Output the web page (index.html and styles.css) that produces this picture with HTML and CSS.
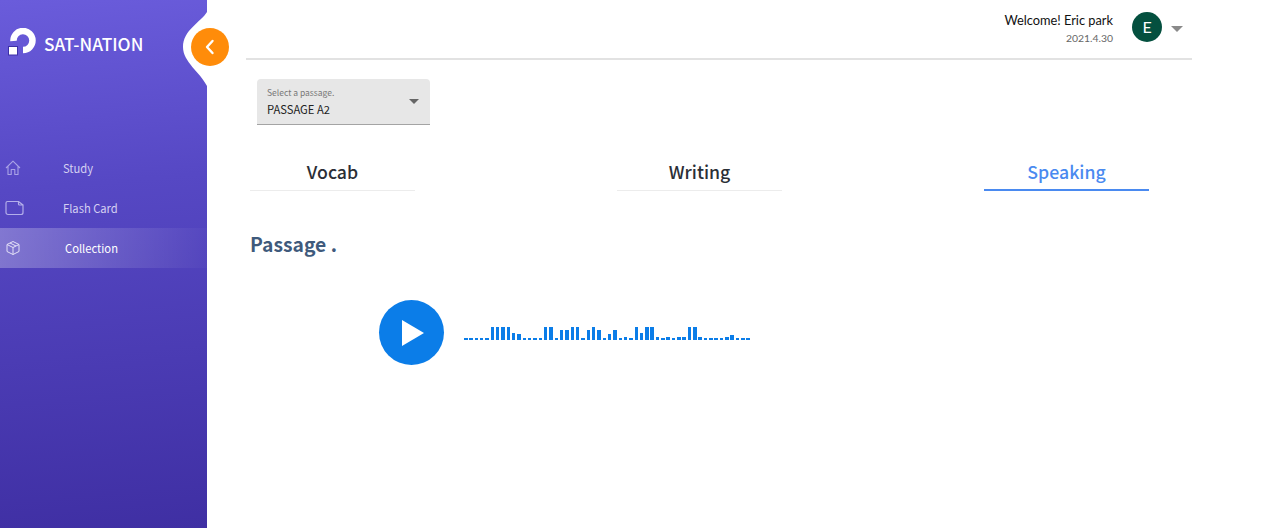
FILE: index.html
```html
<!DOCTYPE html>
<html lang="en">
<head>
<meta charset="utf-8">
<title>SAT-NATION</title>
<link rel="stylesheet" href="styles.css">
</head>
<body>
<div class="app">
  <aside class="sidebar">
    <div class="brand">
      <svg class="brand-mark" width="28" height="28" viewBox="0 0 28 28">
        <path d="M5.5 13 A9.5 9.5 0 1 1 15 22" fill="none" stroke="#fff" stroke-width="6.5"/>
        <rect x="0.5" y="18.5" width="9" height="8.5" fill="#fff" stroke="#3c2fa8" stroke-width="1"/>
      </svg>
      <span class="brand-name">SAT-NATION</span>
    </div>
    <svg class="notch" width="24" height="74" viewBox="0 0 24 74">
      <path d="M24 0 C18 10 0 18 0 35 C0 50 17 60 24 74 Z" fill="#fff"/>
    </svg>
    <button class="collapse" type="button" aria-label="Collapse">
      <svg width="12" height="16" viewBox="0 0 12 16"><path d="M8.5 2 L3 8 L8.5 14" fill="none" stroke="#fff" stroke-width="2.4" stroke-linecap="round" stroke-linejoin="round"/></svg>
    </button>
    <nav class="nav">
      <a class="nav-item">
        <svg class="nav-icon" width="16" height="16" viewBox="0 0 16 16"><path d="M1 8 L8 1.2 L15 8 M3 6.5 V14.5 H6.2 V9.5 H9.8 V14.5 H13 V6.5" fill="none" stroke="#a9a3e6" stroke-width="1.1" stroke-linejoin="round"/></svg>
        <span>Study</span>
      </a>
      <a class="nav-item">
        <svg class="nav-icon" width="19" height="15" viewBox="0 0 19 15"><path d="M2.5 1 H13.5 V3.5 A1 1 0 0 0 14.5 4.5 H18 V12 A2 2 0 0 1 16 14 H3 A2 2 0 0 1 1 12 V2.5 A1.5 1.5 0 0 1 2.5 1 Z M13.5 1 L18 4.5" fill="none" stroke="#b3aeea" stroke-width="1.2"/></svg>
        <span>Flash Card</span>
      </a>
      <a class="nav-item is-active">
        <svg class="nav-icon" width="16" height="16" viewBox="0 0 16 16"><path d="M8 1.5 L14 4.5 V11.5 L8 14.5 L2 11.5 V4.5 Z M2 4.5 L8 7.5 L14 4.5 M8 7.5 V14.5 M5 3 L11 6" fill="none" stroke="#e4e1f7" stroke-width="1" stroke-linejoin="round"/></svg>
        <span>Collection</span>
      </a>
    </nav>
  </aside>

  <main class="main">
    <header class="topbar">
      <div class="user-text">
        <div class="welcome">Welcome! Eric park</div>
        <div class="date">2021.4.30</div>
      </div>
      <div class="avatar">E</div>
      <div class="caret caret-top"></div>
    </header>

    <div class="select">
      <div class="select-text">
        <div class="select-label">Select a passage.</div>
        <div class="select-value">PASSAGE A2</div>
      </div>
      <div class="caret caret-select"></div>
    </div>

    <div class="tabs">
      <div class="tab">Vocab</div>
      <div class="tab">Writing</div>
      <div class="tab is-active">Speaking</div>
    </div>

    <h2 class="passage">Passage .</h2>

    <div class="player">
      <button class="play" type="button" aria-label="Play">
        <svg width="22" height="26" viewBox="0 0 22 26"><path d="M0 0 L22 13 L0 26 Z" fill="#fff"/></svg>
      </button>
      <div class="wave">
        <i class="d"></i><i class="d"></i><i class="d"></i><i class="d"></i><i class="d"></i>
        <i class="t"></i><i class="t"></i><i class="t"></i><i class="t"></i><i class="m"></i><i class="s"></i>
        <i class="d"></i><i class="d"></i><i class="d"></i><i class="d"></i>
        <i class="t"></i><i class="t"></i><i class="d"></i>
        <i class="l"></i><i class="l"></i><i class="t"></i><i class="t"></i><i class="d"></i>
        <i class="l"></i><i class="t"></i><i class="l"></i><i class="d"></i><i class="s"></i><i class="l"></i>
        <i class="d"></i><i class="x"></i><i class="d"></i><i class="t"></i><i class="m"></i><i class="t"></i><i class="t"></i>
        <i class="x"></i><i class="d"></i><i class="x"></i><i class="d"></i><i class="x"></i><i class="x"></i><i class="t"></i><i class="t"></i>
        <i class="x"></i><i class="d"></i><i class="d"></i><i class="d"></i><i class="d"></i><i class="x"></i><i class="y"></i><i class="d"></i><i class="d"></i><i class="d"></i>
      </div>
    </div>
  </main>
</div>
</body>
</html>
```
FILE: styles.css
```css
* { box-sizing: border-box; }
html, body { margin: 0; height: 100%; background: #fff; overflow: hidden; }
body { font-family: "Noto Sans CJK KR", "Noto Sans", sans-serif; }

.app { display: flex; height: 528px; }

.sidebar {
  position: relative;
  flex: 0 0 207px;
  background: linear-gradient(175deg, #6a5cdb 0%, #5648c4 35%, #3f2fa3 100%);
  color: #fff;
}
.brand { display: flex; align-items: flex-start; padding: 28px 0 0 8px; height: 60px; }
.brand-mark { display: block; flex: none; }
.brand-name { margin-left: 8px; font-size: 17.3px; font-weight: 500; line-height: 32px; letter-spacing: 0; }

.notch { position: absolute; left: 183px; top: 12px; }
.collapse {
  position: absolute; left: 191px; top: 28px;
  width: 38px; height: 38px; padding: 0; border: 0; border-radius: 50%;
  background: #ff8c0a;
  display: flex; align-items: center; justify-content: center;
}

.nav { margin-top: 88px; display: flex; flex-direction: column; }
.nav-item {
  height: 40px; display: flex; align-items: center; position: relative;
  padding: 0 0 1px 63px; font-size: 11.2px; color: #d4d0f2;
}
.nav-icon { position: absolute; left: 5px; top: 50%; transform: translateY(-50%); }
.nav-item.is-active {
  padding-left: 65px; color: #fff;
  background: linear-gradient(90deg, rgba(255,255,255,.27), rgba(255,255,255,.02));
}

.main { flex: 0 0 946px; margin-left: 39px; display: flex; flex-direction: column; }

.topbar {
  height: 60px; border-bottom: 2px solid #e2e2e2;
  display: flex; align-items: flex-start; justify-content: flex-end;
  padding: 12px 9px 0 0;
}
.user-text { text-align: right; font-family: Lato, sans-serif; margin-right: 19px; }
.welcome { font-size: 12.8px; line-height: 16px; color: #111; }
.date { font-size: 10.4px; line-height: 16px; margin-top: 2px; color: #666; font-family: Lato, sans-serif; }
.avatar {
  width: 30px; height: 30px; border-radius: 50%; background: #04503f; color: #fff;
  font: 400 16px/30px Lato, sans-serif; text-align: center; margin-right: 9px;
}
.caret { width: 0; height: 0; border-left: 6px solid transparent; border-right: 6px solid transparent; border-top: 6px solid #8a8a8a; }
.caret-top { margin-top: 14px; margin-right: 0; width: 12px; }
.caret-select { border-left-width: 5px; border-right-width: 5px; border-top: 5px solid #666; margin-right: 11px; }

.select {
  margin: 19px 0 0 11px; width: 173px; height: 46px;
  background: #e7e7e7; border-radius: 4px 4px 0 0; border-bottom: 1px solid #a4a4a4;
  display: flex; align-items: center; justify-content: space-between; padding-left: 10px;
}
.select-label { font-size: 8.5px; line-height: 13px; color: #777; }
.select-value { font-size: 11.2px; line-height: 17px; color: #222; margin-top: 2px; }

.tabs { display: flex; justify-content: space-between; margin: 33px 43px 0 4px; }
.tab {
  width: 165px; height: 33px; text-align: center; font-size: 17.7px; line-height: 27px; font-weight: 500;
  color: #2b2f36; border-bottom: 1px solid #ececec;
}
.tab.is-active { color: #4a8af0; border-bottom: 2px solid #4a8af0; }

.passage { margin: 38px 0 0 4px; font-size: 19.3px; line-height: 30px; font-weight: 700; color: #3f5a7c; }

.player { display: flex; align-items: flex-end; margin: 41px 0 0 133px; }
.play {
  width: 65px; height: 65px; border: 0; border-radius: 50%; padding: 0 0 0 3px;
  background: #0b7de8; display: flex; align-items: center; justify-content: center;
}
.wave { display: flex; align-items: flex-end; gap: 1.83px; margin: 0 0 25px 20px; }
.wave i { display: block; width: 3.5px; background: #0b7de8; }
.wave .d { height: 2px; }
.wave .x { height: 3px; }
.wave .y { height: 5px; }
.wave .s { height: 6px; }
.wave .m { height: 7px; }
.wave .l { height: 10px; }
.wave .t { height: 13px; }
```
